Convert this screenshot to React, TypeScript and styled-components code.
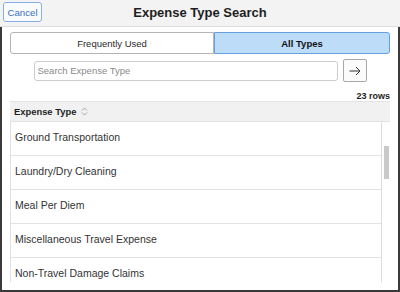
import styled, { createGlobalStyle } from "styled-components";

const GlobalStyle = createGlobalStyle`
  * {
    box-sizing: border-box;
  }
  body {
    margin: 0;
    background: #ffffff;
    font-family: "Liberation Sans", Arial, sans-serif;
  }
`;

const Frame = styled.div`
  width: 400px;
  height: 292px;
  display: flex;
  flex-direction: column;
  overflow: hidden;
`;

const Header = styled.div`
  height: 27px;
  flex-shrink: 0;
  display: grid;
  grid-template-columns: 1fr auto 1fr;
  align-items: center;
  padding: 0 3px;
  background-color: #f3f3f3;
  border-bottom: 1px solid #dddddd;
`;

const CancelButton = styled.button`
  justify-self: start;
  width: 39px;
  height: 20px;
  margin-top: -2px;
  padding: 0;
  font-family: "Liberation Sans", Arial, sans-serif;
  font-size: 9.7px;
  color: #3a70c2;
  background-color: #fafbfd;
  border: 1px solid #86aee6;
  border-radius: 3px;
`;

const Title = styled.h1`
  margin: 0 0 2px;
  font-size: 13px;
  font-weight: bold;
  color: #1e1e1e;
`;

const Body = styled.div`
  flex: 1;
  min-height: 0;
  display: flex;
  flex-direction: column;
  padding: 5px 8px 8px 8px;
  border: 2px solid #3a3a3a;
  border-top: none;
`;

const Segmented = styled.div`
  display: flex;
  height: 22px;
  flex-shrink: 0;
`;

const Segment = styled.div<{ active?: boolean; w: number; side: "left" | "right" }>`
  width: ${(p) => p.w}px;
  display: flex;
  align-items: center;
  justify-content: center;
  font-size: 9.5px;
  font-weight: ${(p) => (p.active ? "bold" : "normal")};
  color: ${(p) => (p.active ? "#111111" : "#2a2a2a")};
  background-color: ${(p) => (p.active ? "#bddcf8" : "#ffffff")};
  border: 1px solid ${(p) => (p.active ? "#66a0e2" : "#b4b4b4")};
  border-radius: ${(p) => (p.side === "left" ? "3px 0 0 3px" : "0 3px 3px 0")};
`;

const SearchRow = styled.div`
  display: flex;
  align-items: center;
  justify-content: center;
  gap: 5px;
  margin-top: 5px;
  flex-shrink: 0;
`;

const SearchInput = styled.input`
  width: 304px;
  height: 20px;
  padding: 0 3px;
  font-family: "Liberation Sans", Arial, sans-serif;
  font-size: 9.5px;
  color: #333333;
  border: 1px solid #cccccc;
  border-radius: 3px;
  outline: none;

  &::placeholder {
    color: #8a8a8a;
  }
`;

const GoButton = styled.button`
  width: 24px;
  height: 23px;
  padding: 0;
  display: flex;
  align-items: center;
  justify-content: center;
  background-color: #fbfbfb;
  border: 1px solid #a8a8a8;
  border-radius: 2px;
`;

const RowCount = styled.div`
  margin-top: 9px;
  height: 10px;
  line-height: 10px;
  text-align: right;
  font-size: 9px;
  font-weight: bold;
  color: #1e1e1e;
  flex-shrink: 0;
`;

const Table = styled.div`
  flex: 1;
  min-height: 0;
  display: flex;
  flex-direction: column;
`;

const TableHead = styled.div`
  height: 21px;
  flex-shrink: 0;
  display: flex;
  align-items: center;
  gap: 5px;
  padding-left: 4px;
  font-size: 9.4px;
  font-weight: bold;
  color: #1e1e1e;
  background-color: #f1f1f1;
  border-top: 1px solid #e4e4e4;
  border-bottom: 1px solid #e2e2e6;
`;

const TableBody = styled.div`
  flex: 1;
  min-height: 0;
  display: flex;
`;

const RowList = styled.div`
  flex: 1;
  overflow: hidden;
  border-left: 1px solid #e0e0e6;
  border-right: 1px solid #dcdce2;
`;

const Row = styled.div`
  height: 34px;
  display: flex;
  align-items: center;
  padding: 0 0 4px 4px;
  font-size: 10.5px;
  color: #333333;
  border-bottom: 1px solid #e2e2e6;
`;

const ScrollTrack = styled.div`
  width: 8px;
  padding: 24px 1px 0 2px;
`;

const ScrollThumb = styled.div`
  width: 5px;
  height: 33px;
  background-color: #c9c9c9;
`;

const expenseTypes = [
  "Ground Transportation",
  "Laundry/Dry Cleaning",
  "Meal Per Diem",
  "Miscellaneous Travel Expense",
  "Non-Travel Damage Claims",
];

function SortIcon() {
  return (
    <svg width="7" height="9" viewBox="0 0 7 9" fill="none">
      <path d="M1 3.5 L3.5 1 L6 3.5" stroke="#9a9a9a" strokeWidth="0.9" />
      <path d="M1 5.5 L3.5 8 L6 5.5" stroke="#9a9a9a" strokeWidth="0.9" />
    </svg>
  );
}

function ArrowIcon() {
  return (
    <svg width="12" height="10" viewBox="0 0 12 10" fill="none">
      <path d="M0.5 5 H11" stroke="#333333" strokeWidth="1" />
      <path d="M7 1 L11 5 L7 9" stroke="#333333" strokeWidth="1" />
    </svg>
  );
}

function App() {
  return (
    <>
      <GlobalStyle />
      <Frame>
        <Header>
          <CancelButton>Cancel</CancelButton>
          <Title>Expense Type Search</Title>
          <span />
        </Header>
        <Body>
          <Segmented>
            <Segment w={204} side="left">
              Frequently Used
            </Segment>
            <Segment w={176} side="right" active>
              All Types
            </Segment>
          </Segmented>
          <SearchRow>
            <SearchInput placeholder="Search Expense Type" />
            <GoButton>
              <ArrowIcon />
            </GoButton>
          </SearchRow>
          <RowCount>23 rows</RowCount>
          <Table>
            <TableHead>
              Expense Type
              <SortIcon />
            </TableHead>
            <TableBody>
              <RowList>
                {expenseTypes.map((name) => (
                  <Row key={name}>{name}</Row>
                ))}
              </RowList>
              <ScrollTrack>
                <ScrollThumb />
              </ScrollTrack>
            </TableBody>
          </Table>
        </Body>
      </Frame>
    </>
  );
}

export default App;
